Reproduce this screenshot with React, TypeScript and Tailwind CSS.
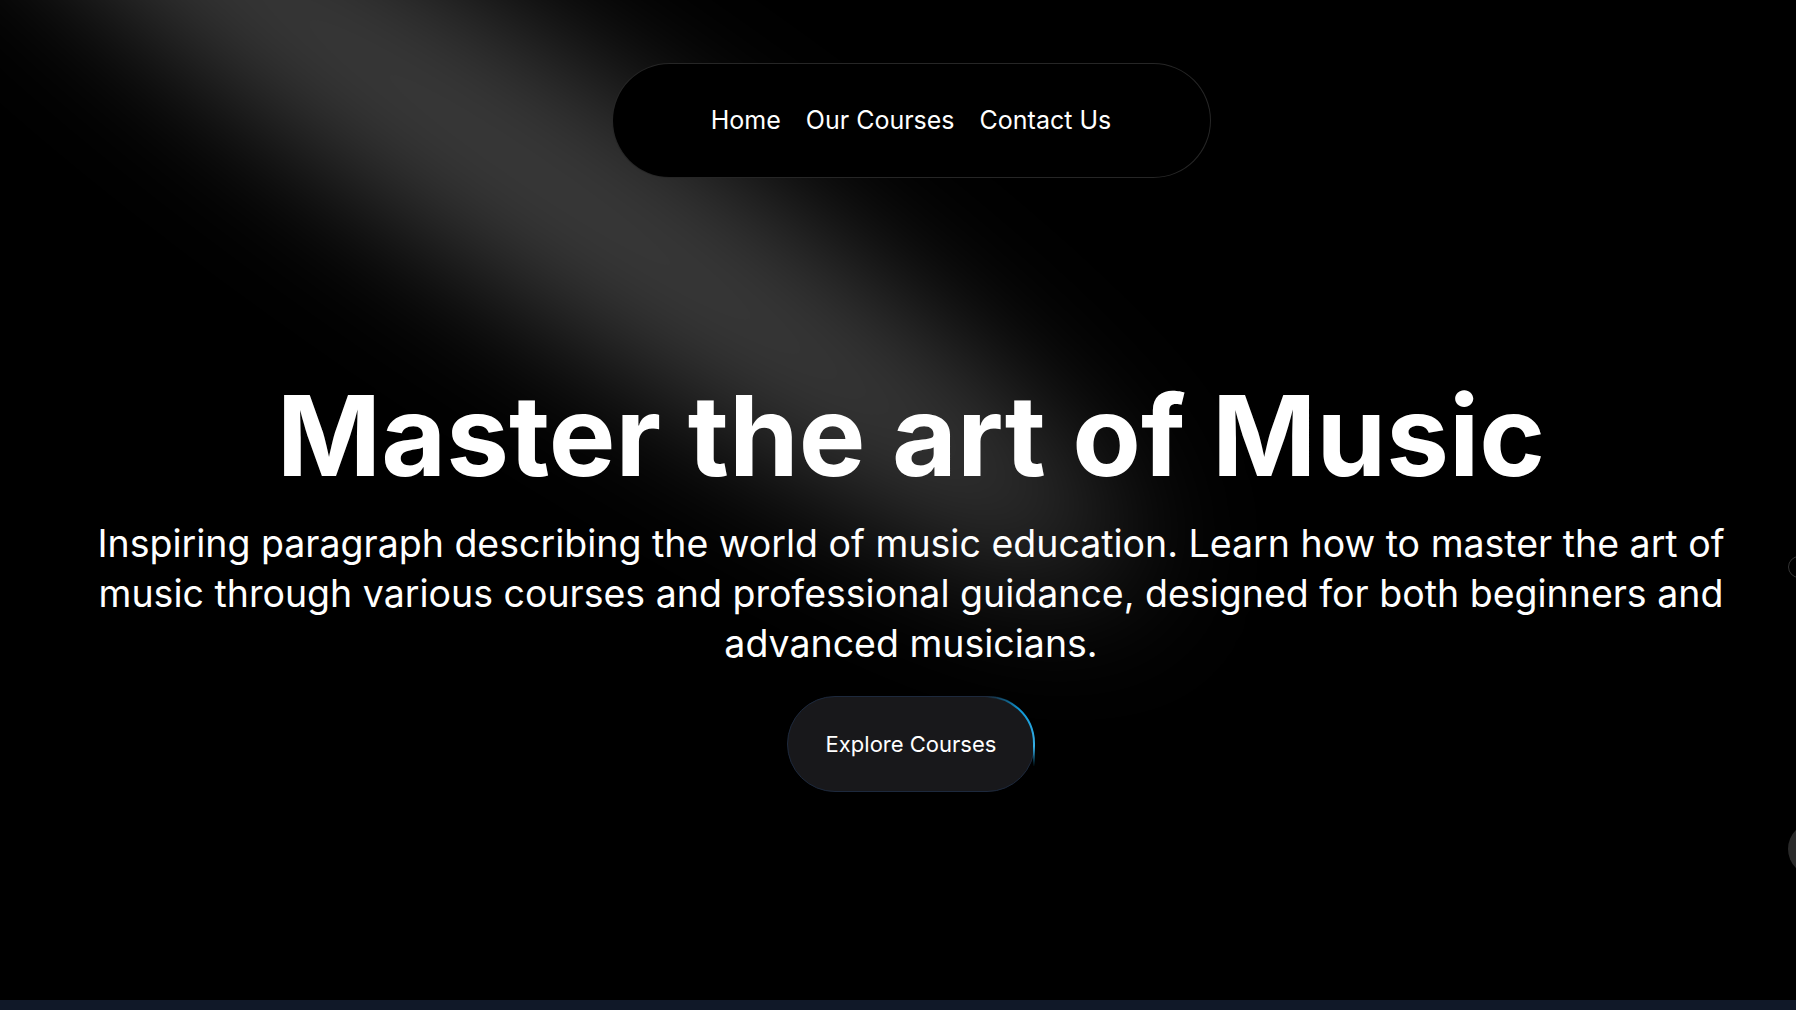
import React from 'react';

const Spotlight = () => (
  <svg className="pointer-events-none absolute left-0 top-0 h-[1000px] w-[1400px]" viewBox="0 0 1400 1000" fill="none">
    <defs>
      <filter id="beamBlur" x="-50%" y="-50%" width="200%" height="200%">
        <feGaussianBlur stdDeviation="70" />
      </filter>
    </defs>
    <g filter="url(#beamBlur)">
      <ellipse cx="530" cy="170" rx="720" ry="115" transform="rotate(34 530 170)" fill="white" fillOpacity="0.23" />
    </g>
  </svg>
);

const MovingBorderButton = () => (
  <button className="relative h-[96px] w-[248px] rounded-full border border-slate-800 bg-[#18181b] text-[22px] text-white">
    <svg className="pointer-events-none absolute -right-[1px] -top-[1px] h-[96px] w-[248px]" viewBox="0 0 248 96" fill="none">
      <defs>
        <linearGradient id="arc" x1="200" y1="0" x2="248" y2="70" gradientUnits="userSpaceOnUse">
          <stop offset="0" stopColor="#0ea5e9" stopOpacity="0" />
          <stop offset="0.35" stopColor="#0ea5e9" stopOpacity="0.9" />
          <stop offset="0.8" stopColor="#38bdf8" stopOpacity="0.9" />
          <stop offset="1" stopColor="#0ea5e9" stopOpacity="0" />
        </linearGradient>
      </defs>
      <path d="M195 1 A47 47 0 0 1 247 48 L247 70" stroke="url(#arc)" strokeWidth="2" />
    </svg>
    <span className="relative">Explore Courses</span>
  </button>
);

export default function App() {
  return (
    <div className="relative w-full overflow-hidden bg-black" style={{ fontFamily: 'Inter, "Noto Sans", sans-serif' }}>
      <div className="relative h-[1000px] w-[1822px]">
        <Spotlight />
        <div className="relative flex flex-col items-center">
          <nav className="mt-[63px] flex h-[115px] w-[599px] items-center justify-center gap-[25px] rounded-full border border-white/15 bg-black text-[25px] text-white">
            <a href="#">Home</a>
            <a href="#">Our Courses</a>
            <a href="#">Contact Us</a>
          </nav>
          <h1 className="mt-[201px] text-[112px] font-bold leading-none text-white">
            Master the art of Music
          </h1>
          <p className="mt-[28px] w-[1700px] text-center text-[37.5px] leading-[50px] text-white">
            Inspiring paragraph describing the world of music education. Learn how to master the art of music through various courses and professional guidance, designed for both beginners and advanced musicians.
          </p>
          <div className="mt-[27px]">
            <MovingBorderButton />
          </div>
        </div>
      </div>
      <div className="absolute left-[1788px] top-[556px] h-[22px] w-[22px] rounded-full border border-white/20" />
      <div className="absolute left-[1788px] top-[822px] h-[54px] w-[54px] rounded-full bg-[#2a2a2a]" />
      <div className="h-[40px] bg-gray-900" />
    </div>
  );
}
